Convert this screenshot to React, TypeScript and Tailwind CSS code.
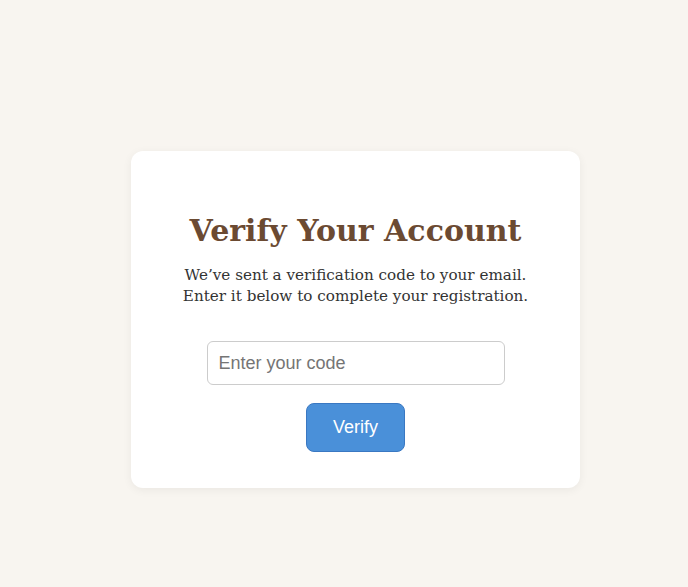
export default function App() {
  return (
    <div className="min-h-screen bg-[#f8f5f0] flex justify-center pt-[151px] pl-[23px]">
      <div className="w-[449px] h-[337px] bg-white rounded-xl shadow-[0_2px_10px_rgba(0,0,0,0.06)] flex flex-col items-center pt-[62px]">
        <h1 className="font-['DejaVu_Serif',Georgia,serif] font-bold text-[30px] leading-[36px] text-[#6b4a32]">
          Verify Your Account
        </h1>
        <p className="mt-[16px] font-['DejaVu_Serif',Georgia,serif] text-[15.2px] leading-[21px] text-[#333] text-center">
          We’ve sent a verification code to your email.
          <br />
          Enter it below to complete your registration.
        </p>
        <input
          type="text"
          placeholder="Enter your code"
          className="mt-[34px] w-[298px] h-[44px] pl-[11px] pr-3 border border-[#ccc] rounded-md font-['Liberation_Sans',Arial,sans-serif] text-[18px] text-[#333] placeholder:text-[#757575] outline-none"
        />
        <button className="mt-[18px] w-[99px] h-[49px] rounded-lg bg-[#4a90d9] border border-[#3a78c2] text-white font-['Liberation_Sans',Arial,sans-serif] text-[18px]">
          Verify
        </button>
      </div>
    </div>
  )
}
